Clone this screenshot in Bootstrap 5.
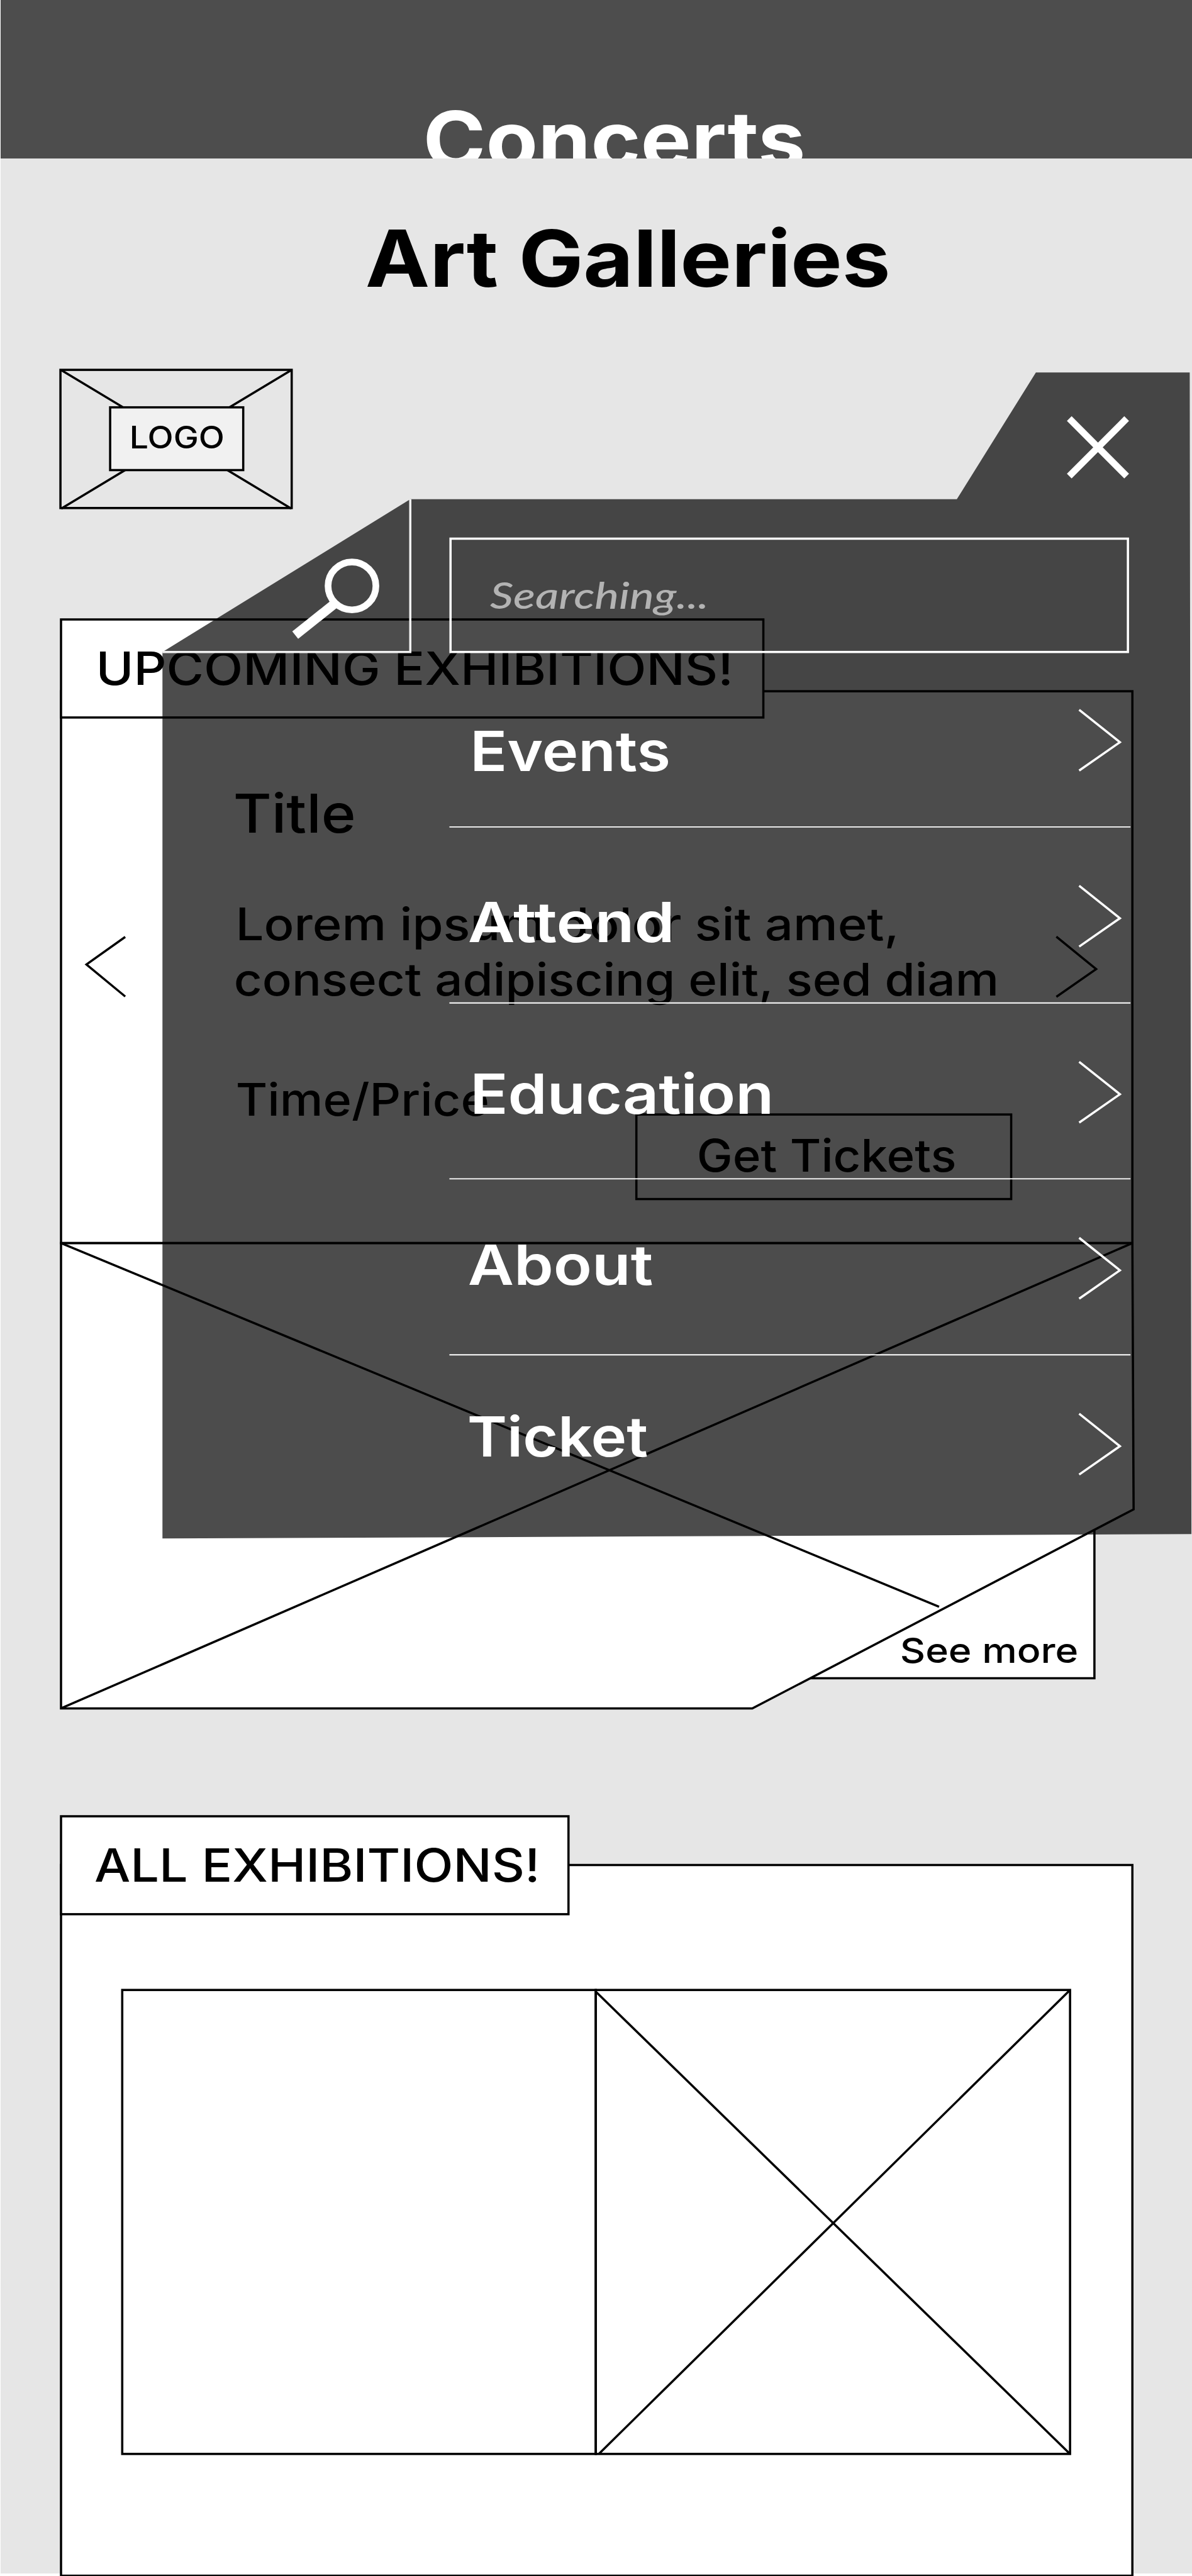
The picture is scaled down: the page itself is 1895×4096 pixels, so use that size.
<!DOCTYPE html>
<html lang="en">
<head>
<meta charset="utf-8">
<meta name="viewport" content="width=device-width, initial-scale=1">
<title>Art Galleries</title>
<link href="https://cdn.jsdelivr.net/npm/bootstrap@5.3.0/dist/css/bootstrap.min.css" rel="stylesheet">
<style>
  /* 1rem = 100 design units */
  html { font-size: 88.46px; }
  body { font-family: Inter, "Open Sans", sans-serif; font-weight: 500; color: #000; background: #fff; overflow: hidden; }
  .artboard { width: 21.42rem; height: 4096px; overflow: hidden; }
  .backdrop { position: absolute; left: 1px; right: 0; top: 0; height: 46.26rem; background: #e6e6e6; }
  .art { position: absolute; left: 0; top: 0; overflow: visible; pointer-events: none; fill: none; stroke: #000; stroke-width: 4; }
  .fit { display: block; width: max-content; line-height: 1rem; white-space: nowrap; transform-origin: 0 50%; margin: 0; }

  .topbar { height: 2.853rem; margin-left: 1px; background: #4d4d4d; color: #fff; overflow: hidden; padding: 2.01rem 0 0 7.65rem; }
  .headline { font-size: 1.417rem; font-weight: 700; }
  .page-title { padding: 1.297rem 0 0 6.585rem; height: 3.792rem; }

  .logo { height: 2.5rem; padding: 1.025rem 0 0 2.358rem; margin-bottom: 1.99rem; }
  .logo .fit { line-height: .4rem; font-size: .557rem; }

  .panel { margin-left: 1.1rem; width: 19.26rem; }
  .panel-tab { height: 1.76rem; font-size: .822rem; }
  .upcoming { height: 21.51rem; }
  .upcoming .panel-tab { padding-left: .69rem; }
  .copy { padding-left: 3.14rem; font-size: .806rem; }
  .copy .show-title { font-size: .97rem; margin: 1.225rem 0 .988rem -.01rem; }
  .copy .lead-in { margin-left: .055rem; }
  .copy .when { margin: 1.157rem 0 0 .03rem; }
  .tickets { height: 1.52rem; width: 6.74rem; margin: -.236rem 0 0 10.34rem; padding: 0 0 .03rem 1.114rem; font-size: .806rem; }
  .see-more { font-size: .627rem; margin: 7.62rem 0 0 15.095rem; }
  .all { height: 13.7rem; }
  .all .panel-tab { padding: .02rem 0 0 .61rem; }

  .menu { left: 2.92rem; top: 6.69rem; width: 18.5rem; height: 21rem; color: #fff; }
  .menu-search { margin: 2.99rem 0 0 5.18rem; height: 2.04rem; width: 12.17rem; padding-left: .71rem; font: italic 500 .652rem Lato, "Open Sans", sans-serif; color: #b3b3b3; }
  .menu-links { margin: .237rem 0 0 5.51rem; font-size: .994rem; font-weight: 600; }
  .menu-links li { height: 3.081rem; }
  .menu-links .stem { margin-left: .094rem; }
</style>
<script src="https://cdn.jsdelivr.net/npm/bootstrap@5.3.0/dist/js/bootstrap.bundle.min.js"></script>
</head>
<body>
<main class="artboard position-relative">
  <div class="backdrop"></div>

  <header class="topbar position-relative">
    <div class="fit headline" data-w="676">Concerts</div>
  </header>

  <div class="page-title position-relative">
    <h1 class="fit headline" data-w="936">Art Galleries</h1>
  </div>

  <div class="logo position-relative d-flex">
    <svg class="art" style="width:21.42rem;height:2.5rem" viewBox="0 664.5 2142 250">
      <rect x="108.6" y="664.6" width="415.6" height="248.4"/>
      <path d="M110 665L523.5 914M523.5 665L110 914"/>
      <rect x="197.9" y="732" width="239.2" height="112.8" fill="#f1f1f1"/>
    </svg>
    <div class="fit position-relative" data-w="165">LOGO</div>
  </div>

  <section class="panel upcoming position-relative">
    <svg class="art" style="width:21.42rem;height:19.6rem" viewBox="110 1113.7 2142 1960">
      <path fill="#fff" d="M1967.2 2750V3016.9H1440L1900 2700Z"/>
      <rect x="110" y="1242.7" width="1925.4" height="992" fill="#fff"/>
      <path fill="#fff" d="M110 2234.7H2035.4L2037.6 2713.3L1352.3 3071.2H110Z"/>
      <path d="M110 2234.7L1688 2888.4M110 3071L2035.4 2234.7"/>
      <rect x="110" y="1113.7" width="1262.2" height="176.2" fill="#fff"/>
      <path d="M225.4 1684.3L155.7 1733.8L225.4 1791.4M1898.8 1683.9L1970.3 1742.2L1898.8 1792"/>
      <rect x="1144" y="2003.5" width="673.6" height="152"/>
    </svg>
    <div class="position-relative d-flex flex-column">
      <div class="panel-tab d-flex align-items-center"><h2 class="fit" style="font-size:inherit" data-w="1133">UPCOMING EXHIBITIONS!</h2></div>
      <div class="copy">
        <h3 class="fit show-title" data-w="212.5">Title</h3>
        <div class="fit lead-in" data-w="1179.5">Lorem ipsum dolor sit amet,</div>
        <div class="fit" data-w="1367">consect adipiscing elit, sed diam</div>
        <div class="fit when" data-w="448.5">Time/Price</div>
      </div>
      <div class="tickets d-flex align-items-center"><span class="fit" data-w="460">Get Tickets</span></div>
      <div class="see-more"><span class="fit" data-w="316">See more</span></div>
    </div>
  </section>

  <section class="panel all position-relative">
    <svg class="art" style="width:21.42rem;height:13.7rem" viewBox="110 3264.8 2142 1370">
      <rect x="110" y="3352.4" width="1925.4" height="1277.5" fill="#fff"/>
      <rect x="110" y="3264.8" width="912" height="176" fill="#fff"/>
      <rect x="220" y="3577" width="851" height="834"/>
      <rect x="1071" y="3577" width="852.4" height="834"/>
      <path d="M1071 3580L1923.4 4411M1923.4 3577L1076.5 4411"/>
    </svg>
    <div class="panel-tab position-relative d-flex align-items-center"><h2 class="fit" style="font-size:inherit" data-w="793.5">ALL EXHIBITIONS!</h2></div>
  </section>

  <aside class="menu position-absolute">
    <svg class="art" style="width:18.5rem;height:21rem;stroke:#fff" viewBox="292 669 1850 2100">
      <path fill="#000" fill-opacity=".7" stroke="none" d="M1862 669.3H2138.5L2141.5 2757.3L292.3 2765.2V1171.7L737.7 897.2H1719.9Z"/>
      <path stroke="#f1f1f1" d="M292.3 1171.8H737.7V897.2"/>
      <circle cx="632.9" cy="1053" r="43" stroke-width="12"/>
      <path stroke-width="17" d="M530.9 1141.4L601 1085.5"/>
      <path stroke-width="12" d="M1922 752.2L2025.1 855.5M2025.1 752.2L1922 855.5"/>
      <rect x="810" y="968" width="1217.4" height="203.7"/>
      <path stroke-width="2.2" d="M808 1486.2H2032M808 1802.5H2032M808 2118.7H2032M808 2435H2032"/>
      <path d="M1939.8 1275.6l73.2 58.3l-73.2 51M1939.8 1592l73.2 58.3l-73.2 51M1939.8 1908.4l73.2 58.3l-73.2 51M1939.8 2224.8l73.2 58.3l-73.2 51M1939.8 2541l73.2 58.3l-73.2 51"/>
    </svg>
    <div class="position-relative d-flex flex-column">
      <div class="menu-search d-flex align-items-center"><span class="fit" data-w="386.5">Searching...</span></div>
      <ul class="menu-links list-unstyled d-flex flex-column">
        <li class="d-flex align-items-center"><span class="fit stem" data-w="348.5">Events</span></li>
        <li class="d-flex align-items-center"><span class="fit" data-w="361.5">Attend</span></li>
        <li class="d-flex align-items-center"><span class="fit stem" data-w="531">Education</span></li>
        <li class="d-flex align-items-center"><span class="fit" data-w="329">About</span></li>
        <li class="d-flex align-items-center"><span class="fit" data-w="320">Ticket</span></li>
      </ul>
    </div>
  </aside>
</main>
<script>
  // Stretch each label so that its inked width equals data-w design units.
  const unit = parseFloat(getComputedStyle(document.documentElement).fontSize) / 100;
  const pen = document.createElement('canvas').getContext('2d');
  document.querySelectorAll('.fit').forEach(el => {
    const s = getComputedStyle(el);
    pen.font = `${s.fontStyle} ${s.fontWeight} ${s.fontSize} ${s.fontFamily}`;
    const m = pen.measureText(el.textContent);
    const k = el.dataset.w * unit / (m.actualBoundingBoxRight + m.actualBoundingBoxLeft);
    el.style.transform = `translateX(${m.actualBoundingBoxLeft * k}px) scaleX(${k})`;
  });
</script>
</body>
</html>
